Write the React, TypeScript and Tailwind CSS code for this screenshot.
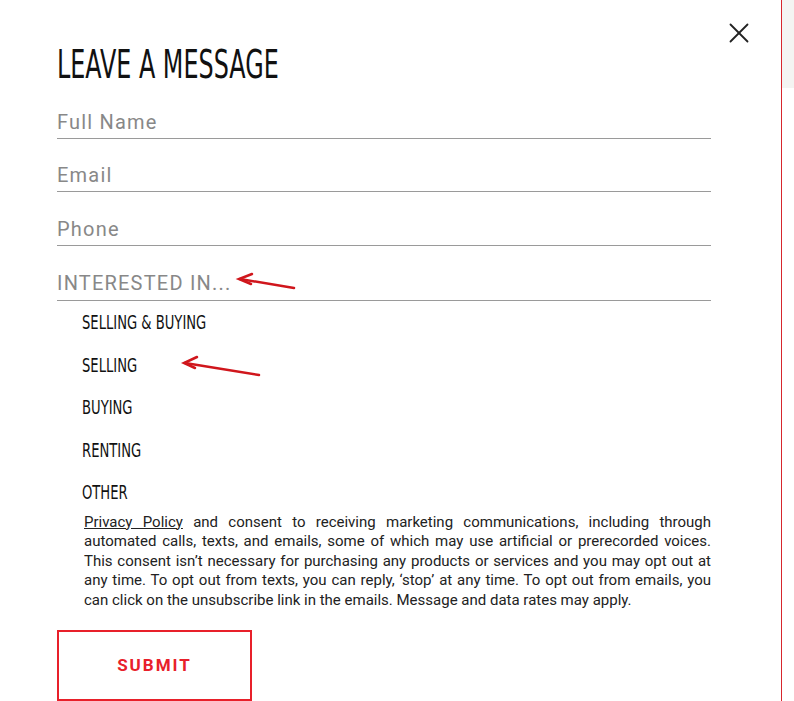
import { X } from 'lucide-react';

const options = ['SELLING & BUYING', 'SELLING', 'BUYING', 'RENTING', 'OTHER'];
const fields = ['Full Name', 'Email', 'Phone'];

const condensed = { fontFamily: '"Liberation Sans Narrow", "DejaVu Sans Condensed", "Liberation Sans", sans-serif' };

export default function App() {
  return (
    <div className="relative flex w-[794px] h-[701px] overflow-hidden bg-white" style={{ fontFamily: 'Roboto, "Liberation Sans", sans-serif' }}>
      {/* Modal panel */}
      <div className="relative w-[782px] h-full border-r border-[#d7262d] bg-white">
        <button className="absolute top-[16px] right-[25px] text-[#222]">
          <X className="w-[34px] h-[34px]" strokeWidth={1.3} />
        </button>

        <div className="w-[654px] ml-[57px] pt-[43px]">
          <h1 className="h-[43px] text-[39px] leading-[43px] text-[#111] origin-left scale-x-[0.68] whitespace-nowrap" style={condensed}>
            LEAVE A MESSAGE
          </h1>

          {fields.map((f, i) => (
            <div key={f} className={`${i === 2 ? 'h-[54px]' : 'h-[53px]'} flex items-end pb-[1px] border-b border-[#9a9a9a]`}>
              <span className="text-[20px] tracking-[1.2px] text-[#888]">{f}</span>
            </div>
          ))}
          <div className="h-[55px] flex items-end pb-[2px] border-b border-[#9a9a9a]">
            <span className="text-[20px] tracking-[1.2px] text-[#888]">INTERESTED IN...</span>
          </div>

          <ul className="pl-[25px]">
            {options.map((o) => (
              <li key={o} className="h-[42.5px] flex items-center">
                <span className="text-[20px] text-[#111] origin-left scale-x-[0.73] whitespace-nowrap" style={condensed}>{o}</span>
              </li>
            ))}
          </ul>

          <p className="-mt-[1px] pl-[27px] text-[15px] leading-[19.5px] text-[#222] text-justify">
            <span className="underline">Privacy Policy</span> and consent to receiving marketing communications, including through automated calls, texts, and emails, some of which may use artificial or prerecorded voices. This consent isn’t necessary for purchasing any products or services and you may opt out at any time. To opt out from texts, you can reply, ‘stop’ at any time. To opt out from emails, you can click on the unsubscribe link in the emails. Message and data rates may apply.
          </p>

          <button className="mt-[20px] w-[195px] h-[71px] border-2 border-[#e8202a] text-[#e8202a] text-[17px] font-bold tracking-[2px]">
            SUBMIT
          </button>
        </div>

        {/* annotation arrows */}
        <svg className="absolute left-0 top-0 pointer-events-none" width="781" height="701">
          <g stroke="#d0161c" strokeWidth="2.5" fill="none" strokeLinecap="round">
            <line x1="294" y1="288" x2="240" y2="279" />
            <polyline points="252,274 239,279 251,284" />
            <line x1="259" y1="375" x2="185" y2="363" />
            <polyline points="197,357 184,363 195,368" />
          </g>
        </svg>
      </div>

      {/* Background page edge */}
      <div className="flex-1 flex flex-col">
        <div className="h-[88px] bg-[#f4f4f2]" />
      </div>
    </div>
  );
}
